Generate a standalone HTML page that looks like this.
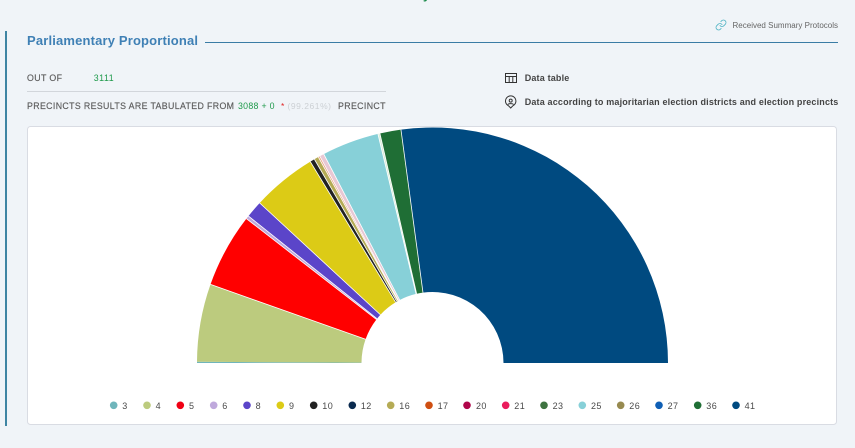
<!DOCTYPE html>
<html lang="en">
<head>
<meta charset="utf-8">
<title>Parliamentary Proportional</title>
<style>
html,body{margin:0;padding:0;width:855px;height:448px;overflow:hidden;background:#f0f4f8}
svg{display:block}
text{font-family:"Liberation Sans",sans-serif}
.g{stroke:#fff;stroke-width:.8}
.l{font-size:9px;fill:#4a4a4a;letter-spacing:.4px}
.t{font-size:8.8px;fill:#5c5c5c;stroke:#5c5c5c;stroke-width:.15px}
.n{font-size:8.8px;fill:#1f9a4b}
</style>
</head>
<body>
<svg width="855" height="448" viewBox="0 0 855 448" xmlns="http://www.w3.org/2000/svg">
<rect width="855" height="448" fill="#f0f4f8"/>
<text x="423" y="-1" font-size="13" font-weight="bold" fill="#1a8a4a">y</text>

<rect x="5" y="31" width="2" height="395" fill="#3f85a3"/>
<text x="27" y="45" font-size="13" font-weight="bold" fill="#3f80b5" textLength="171" lengthAdjust="spacing">Parliamentary Proportional</text>
<rect x="205" y="42" width="633" height="1" fill="#3a7ca5"/>

<g fill="none" stroke="#4fb3c4" stroke-width="1.7" stroke-linecap="round" stroke-linejoin="round" transform="translate(715 19) scale(.5)">
<path d="M10 13a5 5 0 0 0 7.54.54l3-3a5 5 0 0 0-7.07-7.07l-1.72 1.71"/>
<path d="M14 11a5 5 0 0 0-7.54-.54l-3 3a5 5 0 0 0 7.07 7.07l1.71-1.71"/>
</g>
<text x="732.5" y="28" font-size="8" fill="#666" textLength="105.5" lengthAdjust="spacing">Received Summary Protocols</text>

<text class="t" x="27" y="81" textLength="35" lengthAdjust="spacing">OUT OF</text>
<text class="n" x="93.7" y="81" textLength="20" lengthAdjust="spacing">3111</text>
<rect x="27" y="91" width="359" height="1" fill="#d2d6db"/>
<text class="t" x="27" y="109" textLength="207" lengthAdjust="spacing">PRECINCTS RESULTS ARE TABULATED FROM</text>
<text class="n" x="238" y="109" textLength="36.5" lengthAdjust="spacing">3088 + 0</text>
<text x="281" y="109" font-size="8.5" fill="#e02020">*</text>
<text x="287.5" y="109" font-size="8.5" fill="#ccd0d4" textLength="43.5" lengthAdjust="spacing">(99.261%)</text>
<text class="t" x="338" y="109" textLength="47.5" lengthAdjust="spacing">PRECINCT</text>

<g fill="none" stroke="#333" stroke-width="1">
<rect x="505.5" y="73.5" width="11" height="9"/>
<path d="M505.5 76.5h11M509.2 76.5v6M512.8 76.5v6"/>
</g>
<text x="524.7" y="81" font-size="9" font-weight="bold" fill="#444" textLength="44.6" lengthAdjust="spacing">Data table</text>
<g fill="none" stroke="#333" stroke-width="1">
<path d="M510.7 108l-2.2-2.2a5.2 5.2 0 1 1 4.4 0z"/>
<circle cx="510.7" cy="100.6" r="1.5"/>
<path d="M507.9 104.6c.7-1.3 4.9-1.3 5.6 0"/>
</g>
<text x="524.7" y="105" font-size="9" font-weight="bold" fill="#444" textLength="313.6" lengthAdjust="spacing">Data according to majoritarian election districts and election precincts</text>

<rect x="27.5" y="126.5" width="809" height="298" rx="3" fill="#fff" stroke="#d9dce3"/>

<path fill="#6fb5bb" d="M361.5 363L197 363A235.5 235.5 0 0 1 197 361.77L361.5 362.63A71 71 0 0 0 361.5 363Z"/>
<path fill="#bccb7e" d="M361.5 362.63L197 361.77A235.5 235.5 0 0 1 210.51 284.39L365.57 339.3A71 71 0 0 0 361.5 362.63Z"/>
<path fill="#ff0000" d="M365.57 339.3L210.51 284.39A235.5 235.5 0 0 1 246.42 218.66L376.4 319.48A71 71 0 0 0 365.57 339.3Z"/>
<path fill="#bfa9dc" d="M376.4 319.48L246.42 218.66A235.5 235.5 0 0 1 248.45 216.08L377.01 318.7A71 71 0 0 0 376.4 319.48Z"/>
<path fill="#5b45c9" d="M377.01 318.7L248.45 216.08A235.5 235.5 0 0 1 259.71 202.99L380.41 314.76A71 71 0 0 0 377.01 318.7Z"/>
<path fill="#dccb16" d="M380.41 314.76L259.71 202.99A235.5 235.5 0 0 1 310.33 161.67L395.67 302.3A71 71 0 0 0 380.41 314.76Z"/>
<path fill="#222222" d="M395.67 302.3L310.33 161.67A235.5 235.5 0 0 1 314.39 159.26L396.89 301.57A71 71 0 0 0 395.67 302.3Z"/>
<path fill="#b5ab55" d="M396.89 301.57L314.39 159.26A235.5 235.5 0 0 1 318.33 157.03L398.08 300.9A71 71 0 0 0 396.89 301.57Z"/>
<path fill="#e8a080" d="M398.08 300.9L318.33 157.03A235.5 235.5 0 0 1 319.77 156.24L398.51 300.66A71 71 0 0 0 398.08 300.9Z"/>
<path fill="#e8c8d4" d="M398.51 300.66L319.77 156.24A235.5 235.5 0 0 1 323.76 154.11L399.72 300.02A71 71 0 0 0 398.51 300.66Z"/>
<path fill="#87d0d8" d="M399.72 300.02L323.76 154.11A235.5 235.5 0 0 1 377.92 133.91L416.05 293.93A71 71 0 0 0 399.72 300.02Z"/>
<path fill="#d8ecd8" d="M416.05 293.93L377.92 133.91A235.5 235.5 0 0 1 379.92 133.44L416.65 293.79A71 71 0 0 0 416.05 293.93Z"/>
<path fill="#1f6e35" d="M416.65 293.79L379.92 133.44A235.5 235.5 0 0 1 400.95 129.62L422.99 292.64A71 71 0 0 0 416.65 293.79Z"/>
<path fill="#004a80" d="M422.99 292.64L400.95 129.62A235.5 235.5 0 0 1 668 363L503.5 363A71 71 0 0 0 422.99 292.64Z"/>

<g class="g">
<line x1="365.57" y1="339.3" x2="210.51" y2="284.39"/>
<line x1="376.4" y1="319.48" x2="246.42" y2="218.66"/>
<line x1="377.01" y1="318.7" x2="248.45" y2="216.08"/>
<line x1="380.41" y1="314.76" x2="259.71" y2="202.99"/>
<line x1="395.67" y1="302.3" x2="310.33" y2="161.67"/>
<line x1="396.89" y1="301.57" x2="314.39" y2="159.26"/>
<line x1="398.08" y1="300.9" x2="318.33" y2="157.03"/>
<line x1="398.51" y1="300.66" x2="319.77" y2="156.24"/>
<line x1="399.72" y1="300.02" x2="323.76" y2="154.11"/>
<line x1="416.05" y1="293.93" x2="377.92" y2="133.91"/>
<line x1="416.65" y1="293.79" x2="379.92" y2="133.44"/>
<line x1="422.99" y1="292.64" x2="400.95" y2="129.62"/>
</g>

<g>
<circle cx="113.7" cy="405.3" r="3.8" fill="#6fb5bb"/><text class="l" x="122.3" y="409">3</text>
<circle cx="147" cy="405.3" r="3.8" fill="#bccb7e"/><text class="l" x="155.6" y="409">4</text>
<circle cx="180.3" cy="405.3" r="3.8" fill="#f00014"/><text class="l" x="189" y="409">5</text>
<circle cx="213.7" cy="405.3" r="3.8" fill="#bfa9dc"/><text class="l" x="222.3" y="409">6</text>
<circle cx="247" cy="405.3" r="3.8" fill="#5b45c9"/><text class="l" x="255.6" y="409">8</text>
<circle cx="280.3" cy="405.3" r="3.8" fill="#dccb16"/><text class="l" x="289" y="409">9</text>
<circle cx="313.7" cy="405.3" r="3.8" fill="#222222"/><text class="l" x="322.3" y="409">10</text>
<circle cx="352.3" cy="405.3" r="3.8" fill="#0a2a4f"/><text class="l" x="360.9" y="409">12</text>
<circle cx="390.7" cy="405.3" r="3.8" fill="#b5ab55"/><text class="l" x="399.3" y="409">16</text>
<circle cx="429" cy="405.3" r="3.8" fill="#cf4f12"/><text class="l" x="437.6" y="409">17</text>
<circle cx="467" cy="405.3" r="3.8" fill="#b0064a"/><text class="l" x="476" y="409">20</text>
<circle cx="505.7" cy="405.3" r="3.8" fill="#ea1c5c"/><text class="l" x="514.3" y="409">21</text>
<circle cx="544" cy="405.3" r="3.8" fill="#3e7340"/><text class="l" x="552.6" y="409">23</text>
<circle cx="582.3" cy="405.3" r="3.8" fill="#87d0d8"/><text class="l" x="591" y="409">25</text>
<circle cx="620.7" cy="405.3" r="3.8" fill="#978a50"/><text class="l" x="629.3" y="409">26</text>
<circle cx="659" cy="405.3" r="3.8" fill="#0f5fb5"/><text class="l" x="667.6" y="409">27</text>
<circle cx="697.7" cy="405.3" r="3.8" fill="#1f6e35"/><text class="l" x="706.3" y="409">36</text>
<circle cx="736" cy="405.3" r="3.8" fill="#004a80"/><text class="l" x="744.6" y="409">41</text>
</g>
</svg>
</body>
</html>
